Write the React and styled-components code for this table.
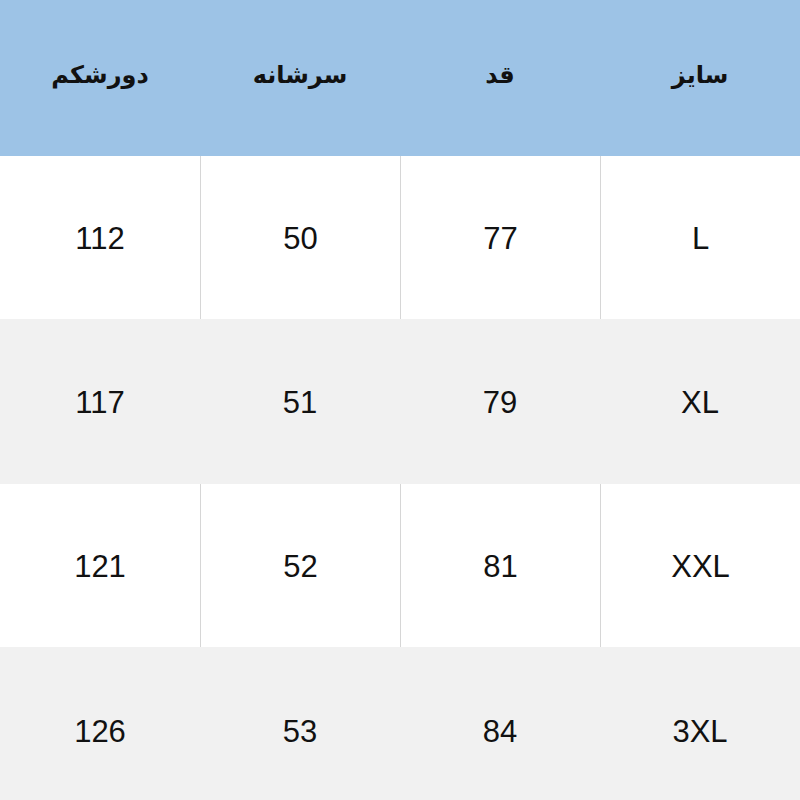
import React from "react";
import styled, { createGlobalStyle } from "styled-components";

const Global = createGlobalStyle`
  html, body { margin: 0; padding: 0; background: #ffffff; overflow: hidden; }
  * { box-sizing: border-box; }
`;

const Table = styled.div`
  width: 800px;
  height: 800px;
  overflow: hidden;
  direction: rtl;
  display: flex;
  flex-direction: column;
`;

const Row = styled.div`
  display: grid;
  grid-template-columns: repeat(4, 200px);
  height: ${(p) => p.$h}px;
  flex-shrink: 0;
  background: ${(p) => p.$bg};
`;

const Cell = styled.div`
  display: flex;
  align-items: center;
  justify-content: center;
  color: #111111;
  font-family: ${(p) => (p.$head ? '"DejaVu Sans", sans-serif' : '"Liberation Sans", Arial, sans-serif')};
  font-size: ${(p) => (p.$head ? "24px" : "31px")};
  font-weight: ${(p) => (p.$head ? 700 : 400)};
  border-left: ${(p) => (p.$line ? "1px solid #d6d6d6" : "none")};
  padding-bottom: ${(p) => (p.$head ? "6px" : "0")};
  padding-top: ${(p) => (p.$head ? "0" : "3px")};
`;

const header = ["سایز", "قد", "سرشانه", "دورشکم"];
const rows = [
  ["L", "77", "50", "112"],
  ["XL", "79", "51", "117"],
  ["XXL", "81", "52", "121"],
  ["3XL", "84", "53", "126"],
];
const heights = [163, 165, 163, 166];

export default function App() {
  return (
    <>
      <Global />
      <Table>
        <Row $h={156} $bg="#9dc3e6">
          {header.map((h) => (
            <Cell key={h} $head>
              {h}
            </Cell>
          ))}
        </Row>
        {rows.map((r, i) => {
          const white = i % 2 === 0;
          return (
            <Row key={i} $h={heights[i]} $bg={white ? "#ffffff" : "#f1f1f1"}>
              {r.map((c, j) => (
                <Cell key={j} $line={white && j < 3}>
                  {c}
                </Cell>
              ))}
            </Row>
          );
        })}
      </Table>
    </>
  );
}
